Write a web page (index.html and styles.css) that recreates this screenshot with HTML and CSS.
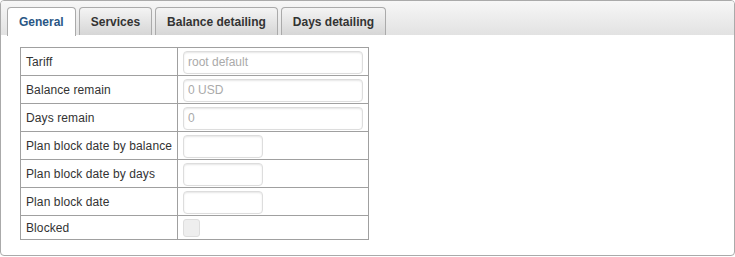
FILE: index.html
```html
<!DOCTYPE html>
<html lang="en">
<head>
    <meta charset="UTF-8">
    <title>User</title>
    <link rel="stylesheet" href="styles.css">
</head>
<body>
    <div class="tabs">
        <ul class="tab-nav">
            <li class="tab active">General</li>
            <li class="tab">Services</li>
            <li class="tab">Balance detailing</li>
            <li class="tab">Days detailing</li>
        </ul>
        <div class="tab-panel">
            <table class="form-table">
                <tr>
                    <td class="label">Tariff</td>
                    <td><input type="text" class="wide" value="root default" disabled></td>
                </tr>
                <tr>
                    <td class="label">Balance remain</td>
                    <td><input type="text" class="wide" value="0 USD" disabled></td>
                </tr>
                <tr>
                    <td class="label">Days remain</td>
                    <td><input type="text" class="wide" value="0" disabled></td>
                </tr>
                <tr>
                    <td class="label">Plan block date by balance</td>
                    <td><input type="text" class="short"></td>
                </tr>
                <tr>
                    <td class="label">Plan block date by days</td>
                    <td><input type="text" class="short"></td>
                </tr>
                <tr>
                    <td class="label">Plan block date</td>
                    <td><input type="text" class="short"></td>
                </tr>
                <tr class="small-row">
                    <td class="label">Blocked</td>
                    <td><input type="checkbox" class="check" disabled></td>
                </tr>
            </table>
        </div>
    </div>
</body>
</html>
```
FILE: styles.css
```css
body {
    margin: 0;
    font-family: 'Liberation Sans', Arial, sans-serif;
    font-size: 12px;
    color: #333;
    background: #fff;
}

.tabs {
    width: 733px;
    height: 254px;
    border: 1px solid #aaa;
    border-radius: 4px;
}

.tab-nav {
    list-style: none;
    margin: 0;
    padding: 6px 6px 0;
    height: 28px;
    display: flex;
    gap: 3px;
    background: linear-gradient(#f7f7f7, #e2e2e2);
    border-radius: 3px 3px 0 0;
}

.tab {
    height: 27px;
    line-height: 28px;
    padding: 0 11px;
    font-weight: bold;
    color: #333;
    border: 1px solid #aaa;
    border-bottom: none;
    border-radius: 4px 4px 0 0;
    background: linear-gradient(#f4f4f4, #d6d6d6);
    cursor: pointer;
}

.tab.active {
    height: 28px;
    background: #fff;
    color: #2a5785;
}

.tab-panel {
    padding: 12px 19px;
}

.form-table {
    border-collapse: collapse;
    width: 349px;
}

.form-table td {
    border: 1px solid #a0a0a0;
    height: 27px;
    padding: 0 5px;
    vertical-align: middle;
}

.form-table td.label {
    width: 147px;
    padding-left: 5px;
    padding-right: 4px;
    letter-spacing: 0.1px;
    white-space: nowrap;
}

.form-table .small-row td {
    height: 23px;
}

input[type="text"] {
    box-sizing: border-box;
    display: block;
    height: 23px;
    padding: 0 4px;
    margin: 1px 0 0;
    font-family: 'Liberation Sans', Arial, sans-serif;
    font-size: 12px;
    color: #333;
    background: #fff;
    border: 1px solid #ddd;
    border-radius: 4px;
    box-shadow: inset 0 1px 2px rgba(0, 0, 0, 0.1);
}

input[type="text"]:disabled {
    color: #aaa;
}

input.wide {
    width: 180px;
}

input.short {
    width: 80px;
}

input.check {
    appearance: none;
    display: block;
    box-sizing: border-box;
    width: 17px;
    height: 18px;
    margin: 1px 0 0;
    background: #eee;
    border: 1px solid #ddd;
    border-radius: 3px;
}
```
